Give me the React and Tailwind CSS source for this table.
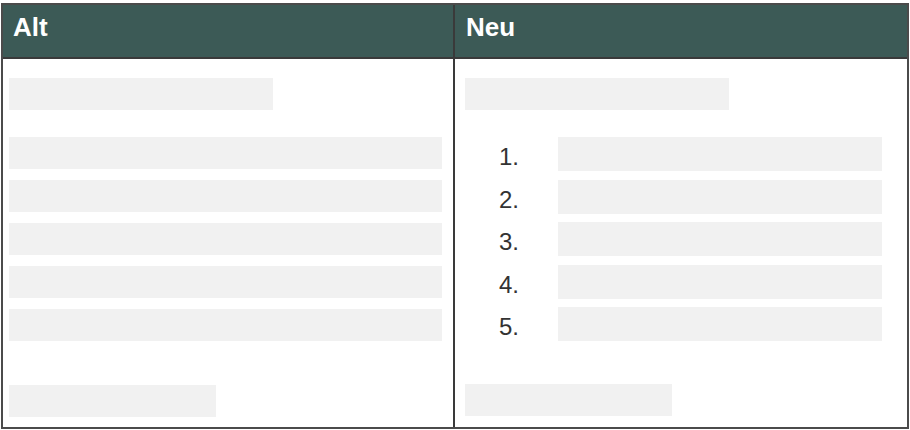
import React from 'react';

const Bar = ({ className }) => <div className={`bg-[#f1f1f1] ${className}`}></div>;

const App = () => {
  const rows = [1, 2, 3, 4, 5];

  return (
    <div className="w-[910px] h-[430px] bg-white pt-[3px] pl-[1px]" style={{ fontFamily: '"Liberation Sans", Arial, sans-serif' }}>
      <div className="w-[908px] h-[426px] border-2 border-[#4b4b4b] grid grid-cols-[452px_1fr] grid-rows-[54px_1fr]">
        {/* Header */}
        <div className="bg-[#3c5a56] border-b-2 border-r-2 border-[#3a3a3a] pl-[10px] pt-[3px]">
          <span className="text-white font-bold text-[26px]">Alt</span>
        </div>
        <div className="bg-[#3c5a56] border-b-2 border-[#3a3a3a] pl-[11px] pt-[3px]">
          <span className="text-white font-bold text-[26px]">Neu</span>
        </div>

        {/* Alt */}
        <div className="border-r-2 border-[#3a3a3a] pl-[6px] pt-[19px] flex flex-col">
          <Bar className="w-[264px] h-[32px]" />
          <div className="mt-[27px] flex flex-col gap-[11px]">
            {rows.map((r) => (
              <Bar key={r} className="w-[433px] h-[32px]" />
            ))}
          </div>
          <Bar className="mt-[44px] w-[207px] h-[32px]" />
        </div>

        {/* Neu */}
        <div className="pl-[10px] pt-[19px] flex flex-col">
          <Bar className="w-[264px] h-[32px]" />
          <div className="mt-[27px] flex flex-col gap-[8.5px]">
            {rows.map((r) => (
              <div key={r} className="flex items-center h-[34px]">
                <span className="w-[93px] pl-[34px] text-[24px] text-[#333] leading-none pt-[6px]">{r}.</span>
                <Bar className="w-[324px] h-[34px]" />
              </div>
            ))}
          </div>
          <Bar className="mt-[43px] w-[207px] h-[32px]" />
        </div>
      </div>
    </div>
  );
};

export default App;
